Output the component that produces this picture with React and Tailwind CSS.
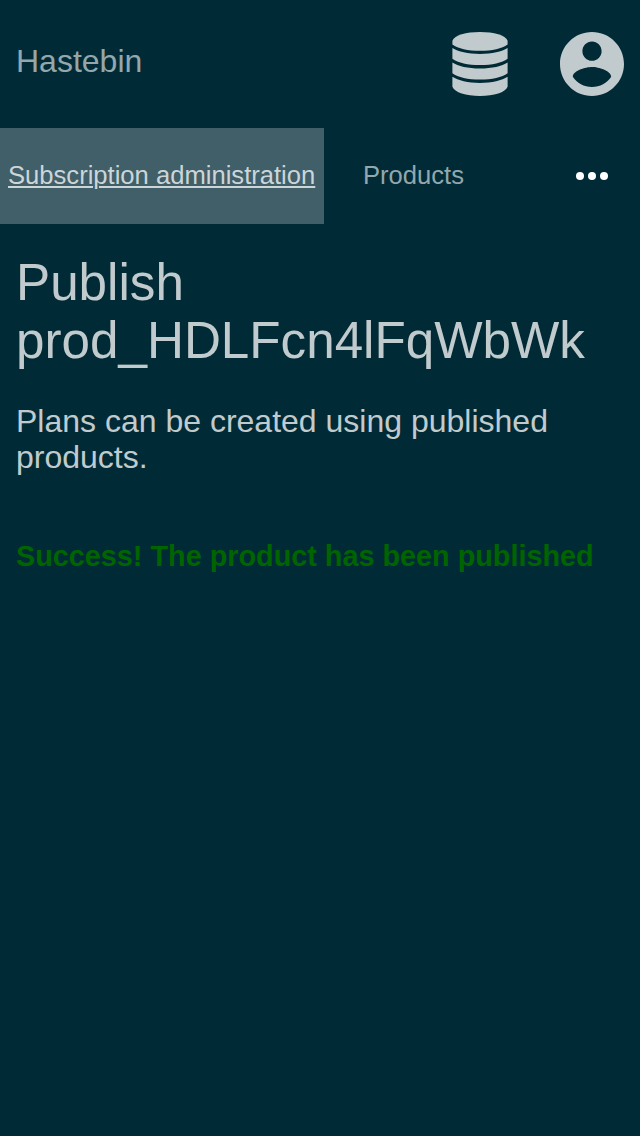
export default function App() {
  return (
    <div className="min-h-screen bg-[#002b36] font-['Liberation_Sans',Arial,sans-serif] text-[#c1cbcd]">
      <header className="flex h-32 items-center justify-between px-4">
        <a className="-mt-1.5 text-[32px] leading-9 text-[#93a7ac]">Hastebin</a>
        <div className="flex items-center gap-12">
          <svg className="h-16 w-16" viewBox="0 0 64 64" fill="#c1cbcd">
            <path d="M4.400 12.400V8.800C6.500 3.300 18 0 32 0S57.500 3.300 59.600 8.800V12.400C54 16.600 44 18.800 32 18.800S10 16.600 4.400 12.400Z" />
            <path d="M4.400 16C10 19.800 20 21.900 32 21.900S54 19.800 59.600 16V26.700C54 30.900 44 33.100 32 33.100S10 30.900 4.400 26.700Z" />
            <path d="M4.400 30.400C10 34.200 20 36.400 32 36.400S54 34.200 59.600 30.400V41.200C54 45.400 44 47.600 32 47.600S10 45.400 4.400 41.200Z" />
            <path d="M4.400 44.800C10 48.600 20 50.900 32 50.900S54 48.600 59.600 44.800V54.800C57.500 60.500 46 64 32 64S6.500 60.500 4.400 54.800Z" />
          </svg>
          <svg className="h-16 w-16" viewBox="2 2 20 20" fill="#c1cbcd">
            <path d="M12 2C6.480 2 2 6.480 2 12s4.480 10 10 10 10-4.480 10-10S17.520 2 12 2zm0 3c1.660 0 3 1.340 3 3s-1.340 3-3 3-3-1.340-3-3 1.340-3 3-3zm0 14.200c-2.500 0-4.710-1.280-6-3.220.030-1.990 4-3.080 6-3.080 1.990 0 5.970 1.090 6 3.080-1.290 1.940-3.500 3.220-6 3.220z" />
          </svg>
        </div>
      </header>
      <nav className="flex h-24 items-center text-[25.6px] leading-[30px]">
        <a className="flex h-24 w-[324px] items-center bg-[#405f68] pb-0.5 pl-2 text-[#ccd5d8] underline decoration-2 underline-offset-2">Subscription administration</a>
        <a className="ml-[39px] pb-0.5 text-[#93a7ac]">Products</a>
        <svg className="mr-8 ml-auto h-2 w-8" viewBox="0 0 32 8" fill="#fff">
          <circle cx="4" cy="4" r="4" />
          <circle cx="16" cy="4" r="4" />
          <circle cx="28" cy="4" r="4" />
        </svg>
      </nav>
      <main className="px-4 pt-[30px]">
        <h1 className="text-[51.2px] leading-[58px]">Publish prod_HDLFcn4lFqWbWk</h1>
        <p className="mt-[33px] text-[32px] leading-9">Plans can be created using published products.</p>
        <p className="mt-[65px] text-[28.8px] leading-[33px] font-bold text-[#006400]">Success! The product has been published</p>
      </main>
    </div>
  )
}
